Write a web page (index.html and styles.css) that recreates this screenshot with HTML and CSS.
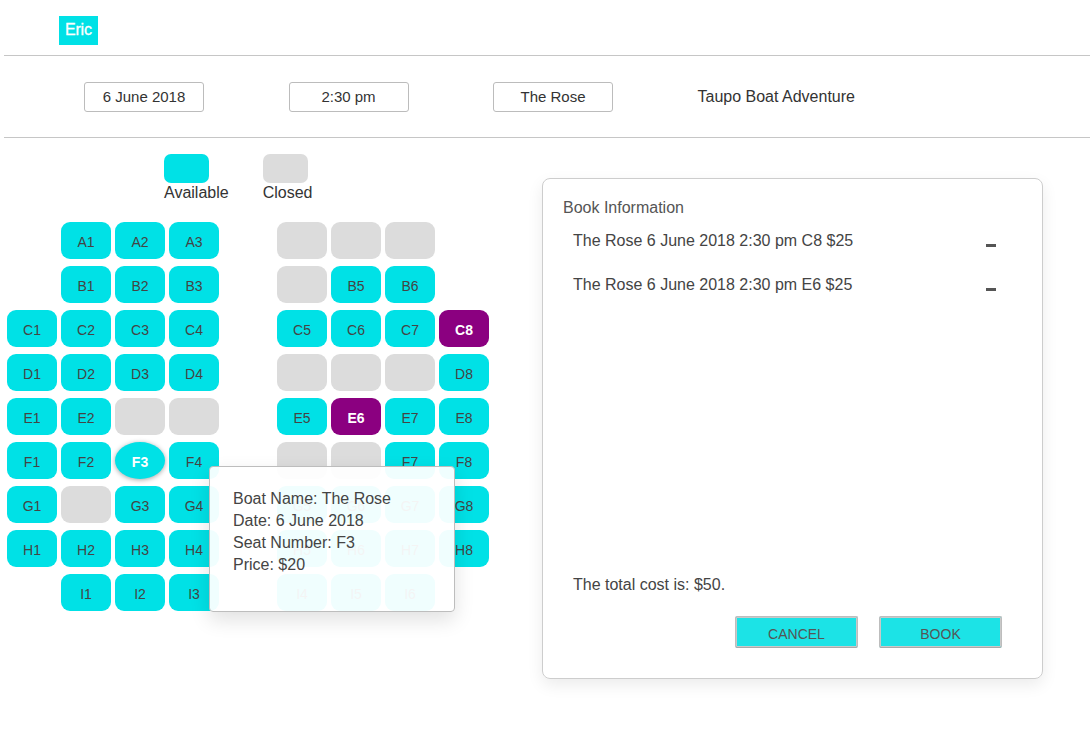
FILE: index.html
```html
<!DOCTYPE html>
<html>
<head>
<meta charset="utf-8">
<title>Taupo Boat Adventure</title>
<link rel="stylesheet" href="styles.css">
</head>
<body>
<div class="page">
  <header class="header">
    <span class="user">Eric</span>
  </header>
  <div class="toolbar">
    <div class="field">6 June 2018</div>
    <div class="field">2:30 pm</div>
    <div class="field">The Rose</div>
    <div class="company">Taupo Boat Adventure</div>
  </div>
  <main class="main">
    <section class="seating">
      <div class="legend">
        <div class="legend-item"><span class="swatch available"></span><span class="legend-label">Available</span></div>
        <div class="legend-item"><span class="swatch closed"></span><span class="legend-label">Closed</span></div>
      </div>
      <div class="seat-grid">
        <span class="cell"></span><span class="seat">A1</span><span class="seat">A2</span><span class="seat">A3</span><span class="cell"></span><span class="seat closed"></span><span class="seat closed"></span><span class="seat closed"></span><span class="cell"></span>
        <span class="cell"></span><span class="seat">B1</span><span class="seat">B2</span><span class="seat">B3</span><span class="cell"></span><span class="seat closed"></span><span class="seat">B5</span><span class="seat">B6</span><span class="cell"></span>
        <span class="seat">C1</span><span class="seat">C2</span><span class="seat">C3</span><span class="seat">C4</span><span class="cell"></span><span class="seat">C5</span><span class="seat">C6</span><span class="seat">C7</span><span class="seat selected">C8</span>
        <span class="seat">D1</span><span class="seat">D2</span><span class="seat">D3</span><span class="seat">D4</span><span class="cell"></span><span class="seat closed"></span><span class="seat closed"></span><span class="seat closed"></span><span class="seat">D8</span>
        <span class="seat">E1</span><span class="seat">E2</span><span class="seat closed"></span><span class="seat closed"></span><span class="cell"></span><span class="seat">E5</span><span class="seat selected">E6</span><span class="seat">E7</span><span class="seat">E8</span>
        <span class="seat">F1</span><span class="seat">F2</span><span class="seat hover">F3</span><span class="seat">F4</span><span class="cell"></span><span class="seat closed"></span><span class="seat closed"></span><span class="seat">F7</span><span class="seat">F8</span>
        <span class="seat">G1</span><span class="seat closed"></span><span class="seat">G3</span><span class="seat">G4</span><span class="cell"></span><span class="seat">G5</span><span class="seat">G6</span><span class="seat">G7</span><span class="seat">G8</span>
        <span class="seat">H1</span><span class="seat">H2</span><span class="seat">H3</span><span class="seat">H4</span><span class="cell"></span><span class="seat">H5</span><span class="seat">H6</span><span class="seat">H7</span><span class="seat">H8</span>
        <span class="cell"></span><span class="seat">I1</span><span class="seat">I2</span><span class="seat">I3</span><span class="cell"></span><span class="seat">I4</span><span class="seat">I5</span><span class="seat">I6</span><span class="cell"></span>
      </div>
      <div class="tooltip">
        <div>Boat Name: The Rose</div>
        <div>Date: 6 June 2018</div>
        <div>Seat Number: F3</div>
        <div>Price: $20</div>
      </div>
    </section>
    <aside class="panel">
      <div class="panel-title">Book Information</div>
      <ul class="booking-list">
        <li class="booking"><span>The Rose 6 June 2018 2:30 pm C8 $25</span><span class="remove"></span></li>
        <li class="booking"><span>The Rose 6 June 2018 2:30 pm E6 $25</span><span class="remove"></span></li>
      </ul>
      <div class="total">The total cost is: $50.</div>
      <div class="actions">
        <button class="btn">CANCEL</button>
        <button class="btn">BOOK</button>
      </div>
    </aside>
  </main>
</div>
</body>
</html>
```

FILE: styles.css
```css
* { box-sizing: border-box; }
html, body { margin: 0; padding: 0; background: #fff; }
body {
  font-family: "Liberation Sans", Arial, Helvetica, sans-serif;
  color: #333;
  width: 1090px;
  height: 736px;
  overflow: hidden;
}
.page { margin-left: 4px; }

.header {
  height: 56px;
  padding: 16px 0 0 55px;
  border-bottom: 1px solid #c6c6c6;
}
.user {
  display: inline-block;
  height: 29px;
  padding: 0 6px;
  line-height: 28px;
  background: #00e1e6;
  color: #fff;
  font-size: 16px;
  letter-spacing: -0.2px;
  -webkit-text-stroke: 0.3px #fff;
}

.toolbar {
  height: 82px;
  display: flex;
  align-items: center;
  gap: 84.5px;
  padding-left: 80px;
  border-bottom: 1px solid #c6c6c6;
}
.field {
  width: 120px;
  height: 30px;
  border: 1px solid #bcbcbc;
  border-radius: 3px;
  text-align: center;
  line-height: 28px;
  font-size: 15px;
  color: #333;
}
.company { font-size: 16px; color: #333; }

.main {
  display: flex;
  align-items: flex-start;
}
.seating {
  position: relative;
  padding: 16px 0 0 3px;
  width: 538px;
}
.legend {
  display: flex;
  gap: 34px;
  margin-left: 157px;
}
.legend-item {
  display: flex;
  flex-direction: column;
}
.swatch {
  width: 45px;
  height: 29px;
  border-radius: 7px;
}
.swatch.available { background: #00e1e6; }
.swatch.closed { background: #dcdcdc; }
.legend-label {
  font-size: 16px;
  line-height: 20px;
  color: #333;
}

.seat-grid {
  margin-top: 19px;
  display: grid;
  grid-template-columns: repeat(9, 50px);
  grid-auto-rows: 37px;
  column-gap: 4px;
  row-gap: 7px;
}
.seat {
  display: flex;
  align-items: center;
  justify-content: center;
  border-radius: 9px;
  background: #00e1e6;
  color: #444;
  font-size: 14px;
  padding-top: 3px;
}
.seat.closed { background: #dcdcdc; }
.seat.selected { background: #8b0080; color: #fff; font-weight: bold; }
.seat.hover {
  border-radius: 50%;
  color: #fff;
  font-weight: bold;
  box-shadow: 0 1px 5px rgba(0, 0, 0, 0.35);
}

.tooltip {
  position: absolute;
  left: 205px;
  top: 328px;
  width: 246px;
  height: 146px;
  padding: 21px 0 0 23px;
  background: rgba(255, 255, 255, 0.94);
  border: 1px solid #bdbdbd;
  border-radius: 4px;
  box-shadow: 0 8px 20px rgba(0, 0, 0, 0.12);
  font-size: 16px;
  line-height: 22px;
  color: #444;
}

.panel {
  margin: 40px 0 0 0;
  width: 501px;
  height: 501px;
  border: 1px solid #cdcdcd;
  border-radius: 8px;
  box-shadow: 0 6px 16px rgba(0, 0, 0, 0.08);
  padding: 19px 40px 30px 20px;
  display: flex;
  flex-direction: column;
  color: #555;
}
.panel-title {
  font-size: 16px;
  line-height: 20px;
}
.booking-list {
  list-style: none;
  margin: 0;
  padding: 1px 0 0 10px;
}
.booking {
  height: 44px;
  display: flex;
  align-items: center;
  justify-content: space-between;
  font-size: 16px;
  color: #444;
  padding-right: 6px;
}
.remove {
  width: 10px;
  height: 3px;
  background: #555;
  margin-top: 8px;
}
.total {
  margin-top: auto;
  padding-left: 10px;
  font-size: 16px;
  line-height: 20px;
  color: #444;
}
.actions {
  margin-top: 21px;
  display: flex;
  justify-content: flex-end;
  gap: 21px;
}
.btn {
  width: 123px;
  height: 32px;
  background: #1ce3e6;
  border: 1px solid #bdbdbd;
  border-bottom-color: #a9a9a9;
  border-radius: 2px;
  box-shadow: inset 0 0 0 1px #c9c9c9;
  font-family: "Liberation Sans", Arial, sans-serif;
  font-size: 14px;
  color: #555;
  padding: 3px 0 0 0;
}
```
